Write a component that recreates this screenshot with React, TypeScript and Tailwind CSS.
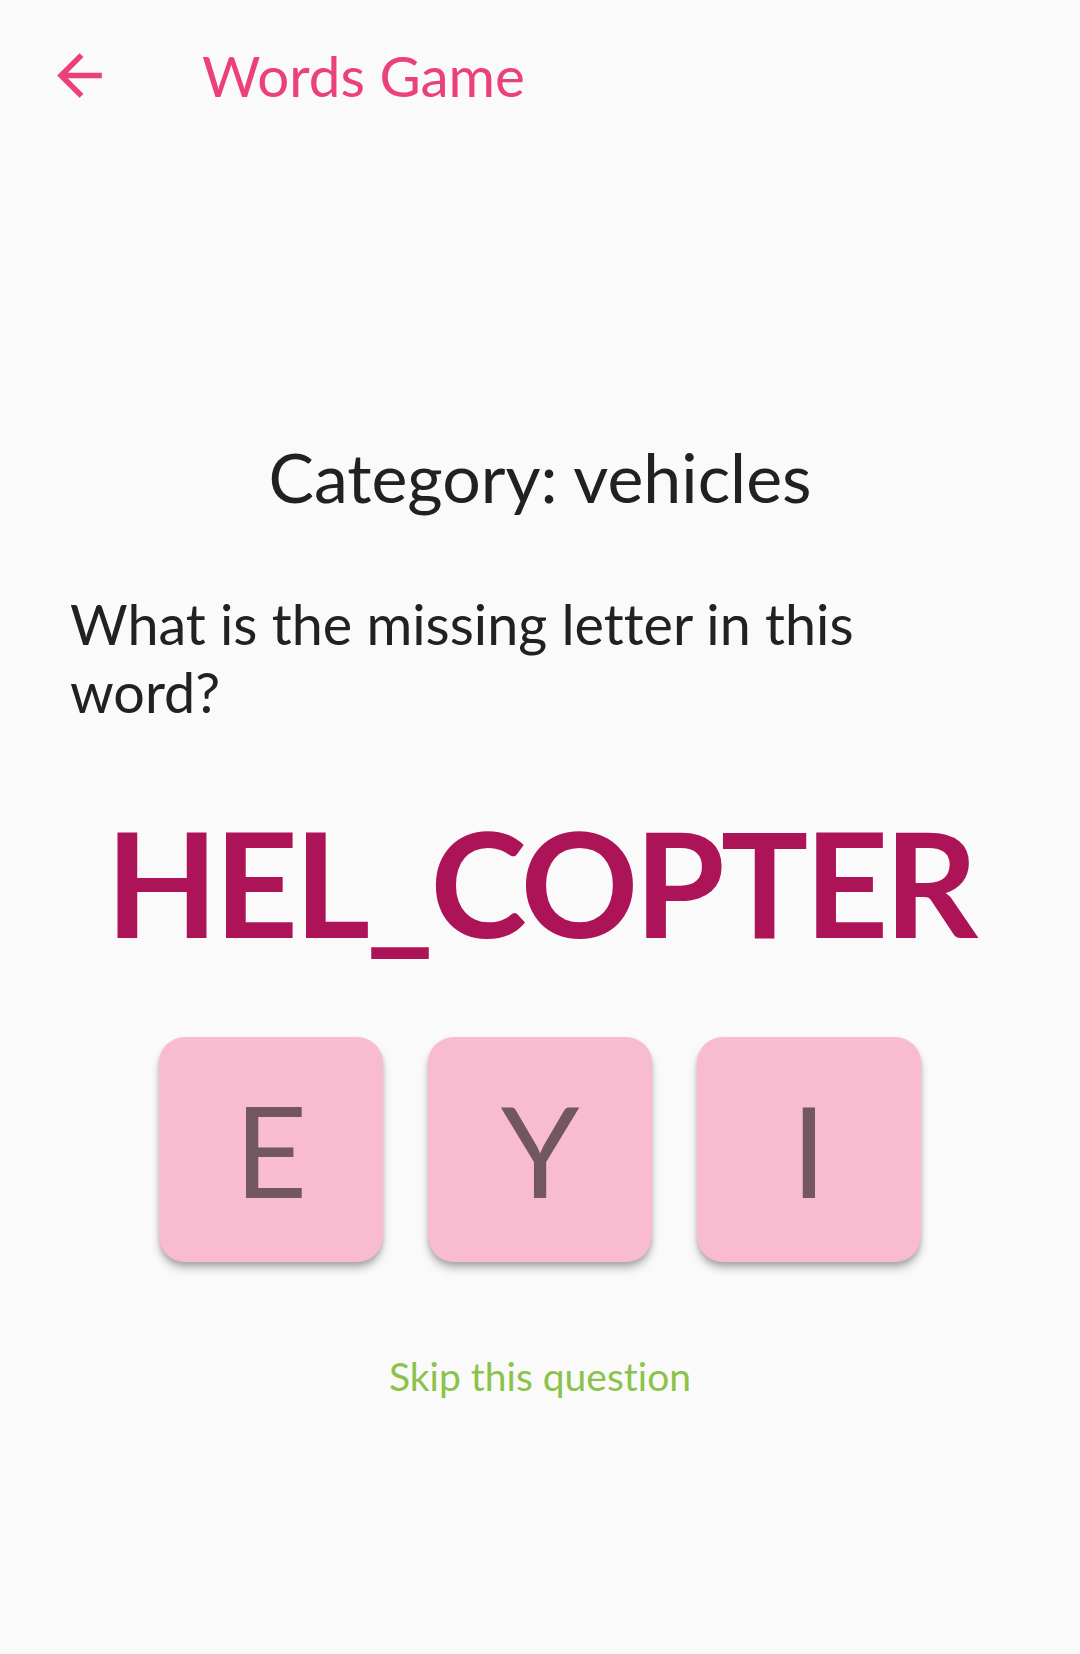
import React from "react";

function BackArrow() {
  return (
    <svg width="67" height="67" viewBox="0 0 24 24" className="block">
      <path
        d="M20 11H7.83l5.59-5.59L12 4l-8 8 8 8 1.41-1.41L7.83 13H20v-2z"
        fill="#ec407a"
      />
    </svg>
  );
}

function LetterButton({ letter }: { letter: string }) {
  return (
    <button className="w-[224px] h-[225px] rounded-[26px] bg-[#f8bbd0] flex items-center justify-center shadow-[0_7px_8px_rgba(0,0,0,0.22),0_3px_4px_rgba(0,0,0,0.14)]">
      <span className="text-[126px] leading-[1.2] text-[#725660] font-normal">{letter}</span>
    </button>
  );
}

export default function App() {
  return (
    <div
      className="w-[1080px] h-[1654px] bg-[#fafafa] flex flex-col [font-variant-ligatures:none]"
      style={{ fontFamily: "Lato, 'Open Sans', sans-serif" }}
    >
      <div className="flex items-start pt-[42px]">
        <div className="ml-[46px] w-[67px] h-[67px]">
          <BackArrow />
        </div>
        <div className="ml-[89px] text-[56.5px] leading-[67px] h-[67px] text-[#ec407a]">
          Words Game
        </div>
      </div>

      <div className="mt-[326px] h-[84px] flex items-center justify-center text-[68px] leading-[1.2] text-[#212121]">
        Category: vehicles
      </div>

      <div className="mt-[71px] pl-[70px] max-w-[900px] text-[55.7px] leading-[68px] text-[#212121]">
        What is the missing letter in this word?
      </div>

      <div className="mt-[68px] text-center text-[146px] leading-[1.2] font-bold tracking-[-4px] text-[#ad1457]">
        HEL_COPTER
      </div>

      <div className="mt-[68px] flex justify-center gap-[45px]">
        <LetterButton letter="E" />
        <LetterButton letter="Y" />
        <LetterButton letter="I" />
      </div>

      <div className="mt-[91px] text-center text-[39px] leading-[1.2] text-[#8bc34a]">
        Skip this question
      </div>
    </div>
  );
}
